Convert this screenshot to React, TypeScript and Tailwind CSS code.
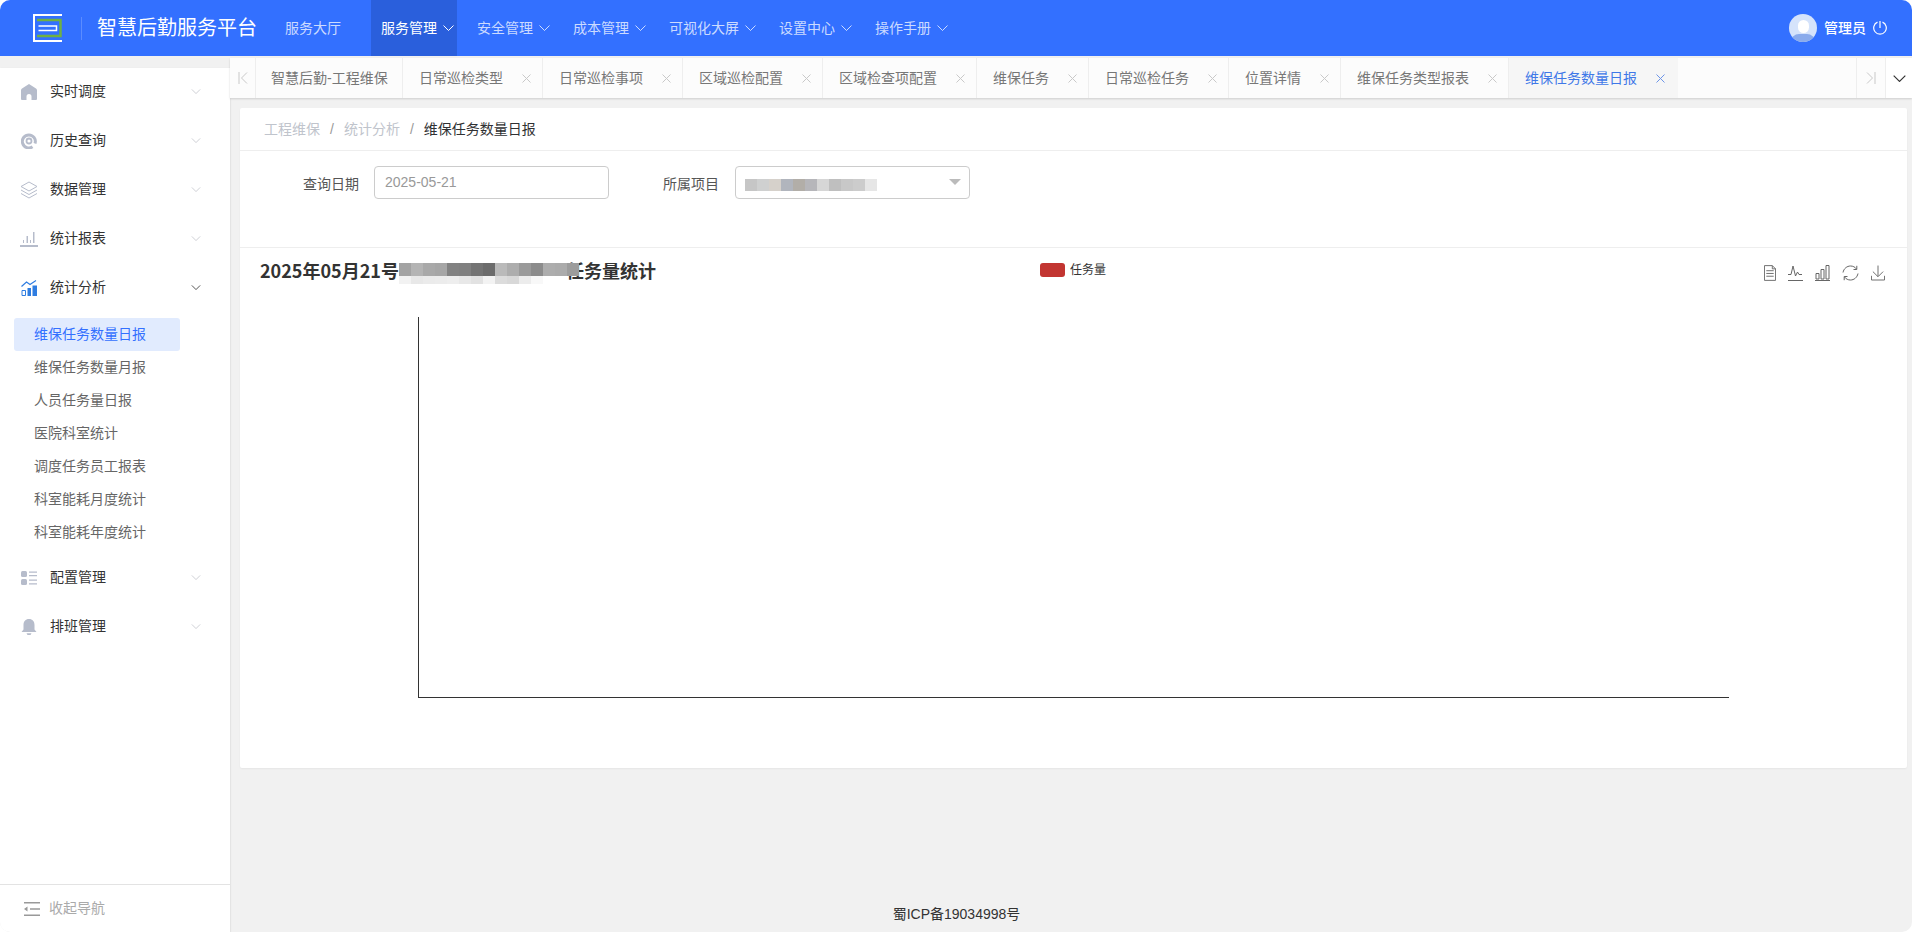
import React from 'react';

const sideItems = [
    { name: '实时调度', icon: 'home' },
    { name: '历史查询', icon: 'search' },
    { name: '数据管理', icon: 'layers' },
    { name: '统计报表', icon: 'report' },
];

const subItems = ['维保任务数量日报', '维保任务数量月报', '人员任务量日报', '医院科室统计', '调度任务员工报表', '科室能耗月度统计', '科室能耗年度统计'];

const navItems = ['服务管理', '安全管理', '成本管理', '可视化大屏', '设置中心', '操作手册'];

const tabs = ['日常巡检类型', '日常巡检事项', '区域巡检配置', '区域检查项配置', '维保任务', '日常巡检任务', '位置详情', '维保任务类型报表'];

const titleMosaicTop = ['bg-[#a3a3a3]', 'bg-[#b4b4b4]', 'bg-[#a9a9a9]', 'bg-[#a6a6a6]', 'bg-[#828282]', 'bg-[#808080]', 'bg-[#747474]', 'bg-[#6c6c6c]', 'bg-[#bababa]', 'bg-[#adadad]', 'bg-[#9a9a9a]', 'bg-[#8c8c8c]', 'bg-[#adadad]', 'bg-[#ababab]', 'bg-[#9c9c9c]'];
const titleMosaicBottom = ['bg-[#f2f2f2]', 'bg-[#e8e8e8]', 'bg-[#ebebeb]', 'bg-[#ececec]', 'bg-[#eeeeee]', 'bg-[#e8e8e8]', 'bg-[#e2e2e2]', 'bg-[#f3f3f3]', 'bg-[#dcdcdc]', 'bg-[#d8d8d8]', 'bg-[#ececec]', 'bg-[#f8f8f8]', 'bg-white', 'bg-transparent', 'bg-transparent'];
const selectMosaic = ['bg-[#c6c6c6]', 'bg-[#cfd0d0]', 'bg-[#d6d1cb]', 'bg-[#b1b5bd]', 'bg-[#b2aea8]', 'bg-[#b6b6ba]', 'bg-[#d6d6d6]', 'bg-[#bfbfbf]', 'bg-[#c8c8c8]', 'bg-[#cccccc]', 'bg-[#e6e6e6]'];

const Chevron: React.FC<{ className?: string }> = ({ className }) => (
    <svg viewBox="0 0 11 6" fill="none" stroke="currentColor" strokeWidth="1" className={className}>
        <path d="M0.5 0.5 5.5 5.5 10.5 0.5" />
    </svg>
);

const Close: React.FC<{ className?: string }> = ({ className }) => (
    <svg viewBox="0 0 9 9" fill="none" stroke="currentColor" strokeWidth="1" className={`w-[9px] h-[9px] ${className}`}>
        <path d="M0.5 0.5 8.5 8.5M8.5 0.5 0.5 8.5" />
    </svg>
);

const SideIcon: React.FC<{ name: string }> = ({ name }) => {
    if (name === 'home') return (
        <svg viewBox="0 0 16 16" className="w-4 h-4 text-[#b6bccb]" fill="currentColor">
            <path d="M8 0 15 4.500Q16 5.200 16 6.500V15a1 1 0 0 1-1 1H10.500V12.500a2.500 2.500 0 0 0-5 0V16H1a1 1 0 0 1-1-1V6.500Q0 5.200 1 4.500Z" />
        </svg>
    );
    if (name === 'search') return (
        <svg viewBox="0 0 16 16" className="w-4 h-4 text-[#b6bccb]" fill="none" stroke="currentColor">
            <path d="M11.500 13.800A6.500 6.500 0 1 1 14 10.500" strokeWidth="3" />
            <circle cx="8" cy="8" r="2.500" strokeWidth="1.800" />
        </svg>
    );
    if (name === 'layers') return (
        <svg viewBox="0 0 18 18" className="w-[18px] h-[18px] text-[#b6bccb]" fill="none" stroke="currentColor" strokeWidth="1">
            <path d="M9 1 17 5.500 9 10 1 5.500Z" />
            <path d="M1 9 9 13.500 17 9" />
            <path d="M1 12.500 9 17 17 12.500" />
        </svg>
    );
    if (name === 'report') return (
        <svg viewBox="0 0 18 16" className="w-[18px] h-4 text-[#b6bccb]" fill="currentColor">
            <path d="M3 9h1v3H3ZM6.500 5h1.500v7H6.500ZM10 9h1v3h-1ZM13 1h1.500v11H13Z" />
            <path d="M0 14h18v2H0Z" />
        </svg>
    );
    if (name === 'analysis') return (
        <svg viewBox="0 0 16 16" className="w-4 h-4" fill="none">
            <path d="M0.500 6.500 5.500 2 9 4.500 15 0.500" stroke="#2f7de1" strokeWidth="1.200" />
            <path d="M6.500 8H10V16H6.500Z" fill="#2f7de1" />
            <path d="M11.500 5.500H16V16H11.500Z" fill="#2f7de1" />
            <path d="M1 10.500H4.500V15.500H1Z" stroke="#2f7de1" strokeWidth="1" />
        </svg>
    );
    if (name === 'config') return (
        <svg viewBox="0 0 16 14" className="w-4 h-[14px] text-[#b6bccb]" fill="currentColor">
            <rect x="0" y="0" width="6" height="6" rx="1.500" />
            <rect x="0" y="8" width="6" height="6" rx="1.500" />
            <path d="M8 0.500h8v1.200H8ZM8 4h8v1.200H8ZM8 8.500h8v1.200H8ZM8 12.300h8v1.200H8Z" />
        </svg>
    );
    return (
        <svg viewBox="0 0 16 16" className="w-4 h-4 text-[#b6bccb]" fill="currentColor">
            <path d="M8 0C11.500 0 13.500 2.500 13.500 6V10.500L15.500 13H0.500L2.500 10.500V6C2.500 2.500 4.500 0 8 0Z" />
            <path d="M5.500 14.200h5L9.500 16h-3Z" />
        </svg>
    );
};

const SideRow: React.FC<{ name: string; icon: string; open?: boolean }> = ({ name, icon, open }) => (
    <div className="h-[49px] flex items-center text-[14px] text-[#333]">
        <span className="w-[50px] flex justify-center pl-[8px] shrink-0"><SideIcon name={icon} /></span>
        <span className="w-[141px]">{name}</span>
        <Chevron className={open ? 'w-[10px] h-[5px] text-[#333]' : 'w-[10px] h-[5px] text-[#c4c7cc]'} />
    </div>
);

const ToolIcons = () => (
    <div className="flex items-start gap-[12px] ml-auto mr-[22px] mt-[17px] text-[#666]">
        <svg viewBox="0 0 13 17" className="w-[12px] h-[16px]" fill="none" stroke="currentColor" strokeWidth="1">
            <path d="M0.500 0.500H9L12.500 4V16.500H0.500Z" />
            <path d="M2.500 6H10.500M2.500 9H10.500M2.500 12H10.500M9 0.500V4H12.500" />
        </svg>
        <svg viewBox="0 0 15 16" className="w-[15px] h-[16px]" fill="none" stroke="currentColor" strokeWidth="1">
            <path d="M0 9.500H3L5 1 7.500 11 9.500 7 11 9.500H14" />
            <path d="M0 15.500H15" />
        </svg>
        <svg viewBox="0 0 15 16" className="w-[15px] h-[16px]" fill="none" stroke="currentColor" strokeWidth="1">
            <path d="M1 8.500H4V14H1ZM6 4.500H9V14H6ZM11 0.500H14V14H11Z" />
            <path d="M0 15.500H15" />
        </svg>
        <svg viewBox="0 0 17 16" className="w-[17px] h-[16px]" fill="none" stroke="currentColor" strokeWidth="1">
            <path d="M1 7.500C1.800 3.500 5 1 8.500 1 11 1 13 2 14.500 4" />
            <path d="M14.800 0.800V4.500H11.500" />
            <path d="M16 8.500C15.200 12.500 12 15 8.500 15 6 15 4 14 2.500 12" />
            <path d="M2.200 15.200V11.500H5.500" />
        </svg>
        <svg viewBox="0 0 15 16" className="w-[14px] h-[16px]" fill="none" stroke="currentColor" strokeWidth="1">
            <path d="M7.500 0V11.500M2 6.500 7.500 12 13 6.500" />
            <path d="M0.500 11V15.500H14.500V11" />
        </svg>
    </div>
);

export default function App() {
    return (
        <div className="h-screen overflow-hidden bg-white">
            <div className="h-full flex flex-col rounded-[10px] overflow-hidden bg-[#f1f1f1] font-['Liberation_Sans','Noto_Sans_CJK_SC',sans-serif]">
                <header className="h-14 shrink-0 bg-[#3370ff] flex items-stretch text-white">
                    <div className="w-[97px] flex items-center shrink-0 pl-[33px]">
                        <svg viewBox="0 0 29 28" className="w-[29px] h-[28px]" fill="none">
                            <path d="M29 1H1V27H29" stroke="#fff" strokeWidth="2" />
                            <path d="M4 6H27.500V22H4" stroke="#6fb043" strokeWidth="2.500" />
                            <path d="M5.500 12H23.500V16.500H5.500" stroke="#fff" strokeWidth="1.500" />
                        </svg>
                        <div className="w-px h-[23px] bg-white/20 ml-[19px]" />
                    </div>
                    <div className="w-[188px] flex items-center shrink-0 text-[20px]">智慧后勤服务平台</div>
                    <div className="w-[86px] flex items-center shrink-0 text-[14px] text-white/75">服务大厅</div>
                    <nav className="flex items-stretch gap-[10px] text-[14px]">
                        {navItems.map((item, index) => (
                            <div key={item} className={index === 0 ? 'flex items-center gap-[6px] pl-[10px] pr-[3px] bg-[#2a5fdc]' : 'flex items-center gap-[6px] pl-[10px] pr-[3px] text-white/75'}>
                                <span>{item}</span>
                                <Chevron className="w-[11px] h-[6px]" />
                            </div>
                        ))}
                    </nav>
                    <div className="ml-auto flex items-center pr-[25px]">
                        <div className="w-[28px] h-[28px] rounded-full bg-[#d5e3fb] overflow-hidden relative flex justify-center">
                            <div className="w-[11px] h-[13px] rounded-full bg-white mt-[6px]" />
                            <div className="absolute bottom-0 w-[24px] h-[8px] rounded-t-full bg-[#8aabec]" />
                        </div>
                        <span className="text-[14px] ml-[7px] font-medium">管理员</span>
                        <svg viewBox="0 0 14 14" className="w-[14px] h-[14px] ml-[7px]" fill="none" stroke="currentColor" strokeWidth="1.200">
                            <path d="M4.500 1.100A6.300 6.300 0 1 0 9.500 1.100M7 0V7" />
                        </svg>
                    </div>
                </header>

                <div className="flex-1 flex min-h-0">
                    <aside className="w-[230px] shrink-0 mt-[12px] bg-white flex flex-col shadow-[1px_0_1px_rgba(0,0,0,0.05)]">
                        <div className="flex-1">
                            <div className="-mt-[1px]">
                                {sideItems.map(item => <SideRow key={item.name} name={item.name} icon={item.icon} />)}
                                <SideRow name="统计分析" icon="analysis" open />
                            </div>
                            <div className="pt-[6px] pb-[4px] px-[14px]">
                                {subItems.map((item, index) => (
                                    <div key={item} className={index === 0 ? 'h-[33px] w-[166px] flex items-center pl-[20px] pb-[1px] text-[14px] rounded-[3px] bg-[#e1ebfe] text-[#3370ff]' : 'h-[33px] w-[166px] flex items-center pl-[20px] pb-[1px] text-[14px] text-[#666]'}>{item}</div>
                                ))}
                            </div>
                            <SideRow name="配置管理" icon="config" />
                            <SideRow name="排班管理" icon="bell" />
                        </div>
                        <div className="h-[48px] border-t border-[#e3e3e3] flex items-center pl-[24px] text-[14px] text-[#aaa]">
                            <svg viewBox="0 0 16 14" className="w-[16px] h-[14px] text-[#999]" fill="currentColor">
                                <path d="M0 0H16V1.500H0ZM0 12.500H16V14H0ZM6 6.200H16V7.700H6ZM0 7 3.500 4.500V9.500Z" />
                            </svg>
                            <span className="ml-[9px]">收起导航</span>
                        </div>
                    </aside>

                    <main className="flex-1 min-w-0 flex flex-col">
                        <div className="h-10 mt-[2px] shrink-0 bg-[#fcfcfc] shadow-[0_1px_2px_rgba(0,0,0,0.15)] flex items-stretch text-[14px] text-[#777]">
                            <div className="w-[26px] shrink-0 border-r border-[#eeeeee] flex items-center justify-center text-[#c8c8c8]">
                                <svg viewBox="0 0 10 12" className="w-[10px] h-[12px]" fill="none" stroke="currentColor" strokeWidth="1">
                                    <path d="M1 0V12M9 0.500 3.500 6 9 11.500" />
                                </svg>
                            </div>
                            <div className="w-[147px] shrink-0 border-r border-[#eeeeee] flex items-center pl-[15px]">智慧后勤-工程维保</div>
                            {tabs.map(tab => (
                                <div key={tab} className="shrink-0 border-r border-[#eeeeee] flex items-center pl-[16px] pr-[11.5px] gap-[18.5px]">
                                    <span>{tab}</span>
                                    <Close className="text-[#c9c9c9]" />
                                </div>
                            ))}
                            <div className="shrink-0 flex items-center pl-[16px] pr-[13px] gap-[19px] bg-[#f6f6f6] text-[#3f78e8]">
                                <span>维保任务数量日报</span>
                                <Close className="text-[#6d95e8]" />
                            </div>
                            <div className="flex-1" />
                            <div className="w-[30px] shrink-0 border-l border-r border-[#eeeeee] flex items-center justify-center text-[#c8c8c8]">
                                <svg viewBox="0 0 10 12" className="w-[10px] h-[12px]" fill="none" stroke="currentColor" strokeWidth="1">
                                    <path d="M9 0V12M1 0.500 6.500 6 1 11.500" />
                                </svg>
                            </div>
                            <div className="w-[26px] shrink-0 bg-white flex items-center justify-center text-[#333]">
                                <Chevron className="w-[13px] h-[7px]" />
                            </div>
                        </div>

                        <section className="mt-[10px] ml-[10px] mr-[5px] h-[660px] shrink-0 bg-white rounded-[2px] shadow-[0_1px_2px_rgba(0,0,0,0.05)]">
                            <div className="h-[43px] border-b border-[#eeeeee] flex items-center pl-[24px] text-[14px]">
                                <span className="text-[#c0c4cc]">工程维保</span>
                                <span className="mx-[10px] text-[#999] font-light">/</span>
                                <span className="text-[#c0c4cc]">统计分析</span>
                                <span className="mx-[10px] text-[#999] font-light">/</span>
                                <span className="text-[#303133]">维保任务数量日报</span>
                            </div>
                            <div className="h-[97px] border-b border-[#eeeeee] flex items-start pt-[15px] text-[14px] text-[#555]">
                                <span className="ml-[63px] mr-[15px] h-[33px] flex items-center pt-[4px]">查询日期</span>
                                <input readOnly value="2025-05-21" className="w-[235px] h-[33px] border border-[#cccccc] rounded-[4px] pl-[10px] pb-[2px] text-[#999] outline-none" />
                                <span className="ml-[54px] mr-[16px] h-[33px] flex items-center pt-[4px]">所属项目</span>
                                <div className="w-[235px] h-[33px] border border-[#cccccc] rounded-[4px] flex items-center pl-[9px] pr-[8px]">
                                    <div className="flex pt-[4px]">
                                        {selectMosaic.map((c, i) => <div key={i} className={`w-[12px] h-[12px] ${c}`} />)}
                                    </div>
                                    <div className="ml-auto mb-[2px] w-0 h-0 border-x-[6px] border-t-[6px] border-x-transparent border-t-[#bbbbbb]" />
                                </div>
                            </div>
                            <div className="flex items-start h-[69px]">
                                <div className="w-[394px] shrink-0 ml-[20px] mt-[9px] flex whitespace-nowrap text-[18px] leading-[26px] font-bold text-[#333] font-['Noto_Sans_CJK_SC',sans-serif]">
                                    <span className="shrink-0">2025年05月21号</span>
                                    <div className="grid grid-cols-[repeat(15,12px)] w-[180px] h-[21px] mt-[6px] -mr-[13px] relative shrink-0">
                                        {titleMosaicTop.map((c, i) => <div key={i} className={`h-[13px] ${c}`} />)}
                                        {titleMosaicBottom.map((c, i) => <div key={i} className={`h-[8px] ${c}`} />)}
                                    </div>
                                    <span className="shrink-0">任务量统计</span>
                                </div>
                                <div className="ml-[386px] mt-[13px] flex items-center">
                                    <div className="w-[25px] h-[14px] rounded-[3px] bg-[#c23531]" />
                                    <span className="ml-[5px] text-[12px] text-[#333]">任务量</span>
                                </div>
                                <ToolIcons />
                            </div>
                            <div className="ml-[178px] w-[1311px] h-[381px] border-l border-b border-[#333]" />
                        </section>

                        <div className="flex-1 flex items-end justify-center pr-[229px] pb-[7px] text-[14px] text-[#333]">蜀ICP备19034998号</div>
                    </main>
                </div>
            </div>
        </div>
    );
}
